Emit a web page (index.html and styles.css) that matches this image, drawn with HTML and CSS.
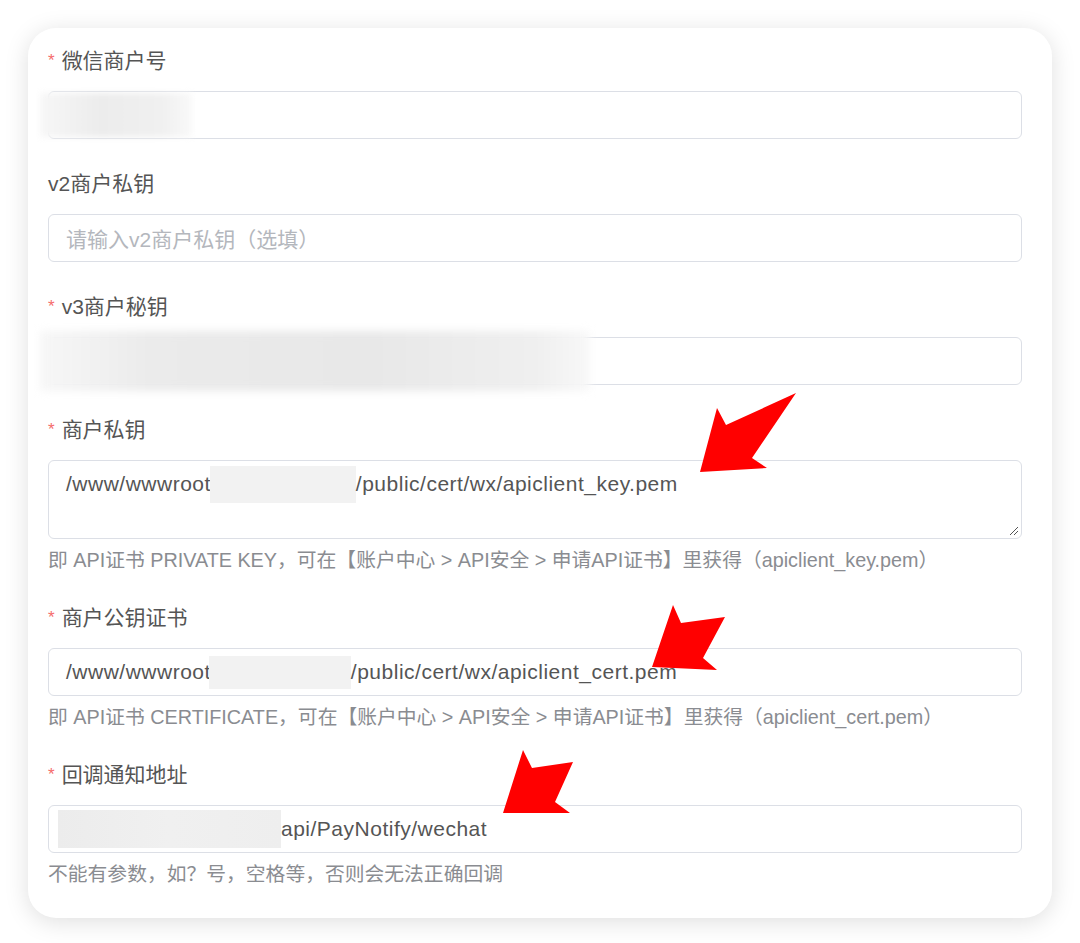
FILE: index.html
```html
<!DOCTYPE html>
<html lang="zh-CN">
<head>
  <meta charset="UTF-8">
  <title>微信支付配置</title>
  <link rel="stylesheet" href="styles.css">
</head>
<body>
  <div class="card">
    <div class="form-item">
      <div class="label"><span class="req">*</span>微信商户号</div>
      <div class="field">
        <span class="redact redact-mchid"></span>
      </div>
    </div>

    <div class="form-item">
      <div class="label">v2商户私钥</div>
      <div class="field placeholder">请输入v2商户私钥（选填）</div>
    </div>

    <div class="form-item">
      <div class="label"><span class="req">*</span>v3商户秘钥</div>
      <div class="field">
        <span class="redact redact-v3"></span>
      </div>
    </div>

    <div class="form-item">
      <div class="label"><span class="req">*</span>商户私钥</div>
      <div class="field textarea">
        <span>/www/wwwroot</span><span class="redact redact-path"></span><span>/public/cert/wx/apiclient_key.pem</span>
        <svg class="resize" width="10" height="10" viewBox="0 0 10 10">
          <line x1="1" y1="9" x2="9" y2="1" stroke="#555" stroke-width="1"/>
          <line x1="5" y1="9" x2="9" y2="5" stroke="#555" stroke-width="1"/>
        </svg>
      </div>
      <div class="help">即 API证书 PRIVATE KEY，可在【账户中心 &gt; API安全 &gt; 申请API证书】里获得（apiclient_key.pem）</div>
    </div>

    <div class="form-item">
      <div class="label"><span class="req">*</span>商户公钥证书</div>
      <div class="field">
        <span>/www/wwwroot</span><span class="redact redact-path2"></span><span>/public/cert/wx/apiclient_cert.pem</span>
      </div>
      <div class="help">即 API证书 CERTIFICATE，可在【账户中心 &gt; API安全 &gt; 申请API证书】里获得（apiclient_cert.pem）</div>
    </div>

    <div class="form-item">
      <div class="label"><span class="req">*</span>回调通知地址</div>
      <div class="field">
        <span class="redact redact-host"></span><span>api/PayNotify/wechat</span>
      </div>
      <div class="help">不能有参数，如？号，空格等，否则会无法正确回调</div>
    </div>
  </div>

  <!-- 标注箭头 -->
  <svg class="arrows" width="1080" height="943" viewBox="0 0 1080 943">
    <polygon points="700,472 717,408 726,425 796,393 752,458 767,468" fill="#ff0000"/>
    <polygon points="652,667 673,605 681,623 725,617 703,658 717,670" fill="#ff0000"/>
    <polygon points="503,813 523,750 532,768 573,762 555,802 570,813" fill="#ff0000"/>
  </svg>
</body>
</html>
```

FILE: styles.css
```css
body {
  margin: 0;
  padding: 28px;
  background-color: #fff;
  font-family: "Liberation Sans", "Noto Sans CJK SC", sans-serif;
  color: #606266;
}
.card {
  width: 1024px;
  box-sizing: border-box;
  background-color: #fff;
  border-radius: 28px;
  box-shadow: 0 4px 24px rgba(0,0,0,0.13);
  padding: 15px 30px 32px 20px;
}
.form-item {
  margin-bottom: 27px;
}
.form-item:nth-child(n+4) {
  margin-bottom: 28px;
}
.form-item:last-child {
  margin-bottom: 0;
}
.label {
  height: 36px;
  line-height: 36px;
  margin-bottom: 12px;
  font-size: 21px;
  color: #555;
}
.req {
  color: #f56c6c;
  font-size: 17px;
  margin-right: 7px;
  vertical-align: 2px;
}
.field {
  position: relative;
  display: flex;
  align-items: center;
  height: 48px;
  box-sizing: border-box;
  border: 1px solid #dcdfe6;
  border-radius: 6px;
  padding: 0 17px;
  font-size: 21px;
  letter-spacing: 0.5px;
  color: #555;
  white-space: nowrap;
}
.field.placeholder {
  color: #b4b7bd;
  letter-spacing: 0;
}
.field.textarea {
  height: 79px;
  align-items: flex-start;
  padding-top: 8px;
  line-height: 30px;
}
.resize {
  position: absolute;
  right: 2px;
  bottom: 2px;
}
.help {
  margin-top: 9px;
  line-height: 24px;
  font-size: 19.8px;
  color: #8a8c91;
}
.arrows {
  position: absolute;
  left: 0;
  top: 0;
  pointer-events: none;
}

/* 打码区域 */
.redact {
  display: inline-block;
  flex: none;
  background-color: #efefef;
}
.redact-mchid {
  width: 152px;
  height: 44px;
  margin-left: -26px;
  background: linear-gradient(90deg, #f7f7f7, #ececec 40%, #f0f0f0 80%, #f9f9f9);
  filter: blur(3px);
}
.redact-v3 {
  width: 550px;
  height: 60px;
  margin-left: -26px;
  background: linear-gradient(90deg, #f7f7f7, #ebebeb 20%, #e8e8e8 60%, #efefef 90%, #f8f8f8);
  filter: blur(4px);
}
.redact-path {
  width: 146px;
  height: 37px;
  margin-left: -1px;
  margin-top: -3px;
  background-color: #f2f2f2;
}
.redact-path2 {
  width: 142px;
  height: 33px;
  margin-left: -2px;
  background-color: #f2f2f2;
}
.redact-host {
  width: 223px;
  height: 38px;
  margin-left: -8px;
  background: linear-gradient(90deg, #ececec, #f0f0f0 50%, #eeeeee);
}
```
